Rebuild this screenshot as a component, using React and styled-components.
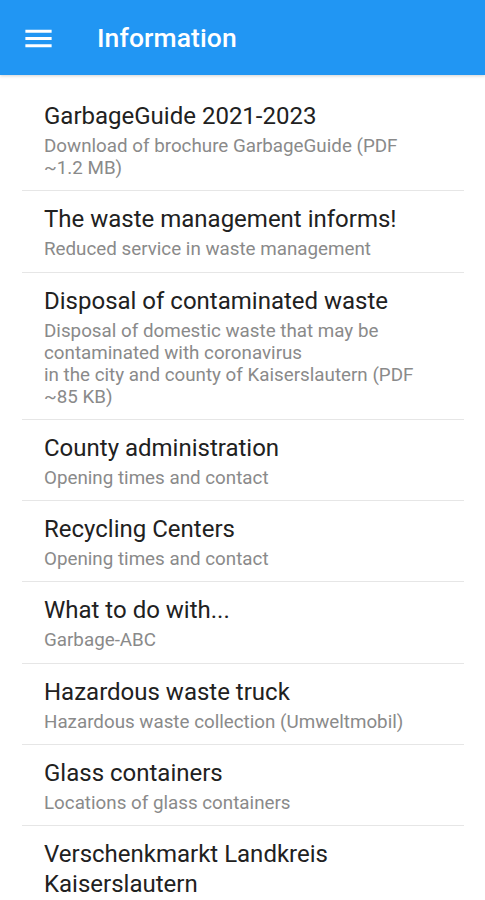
import React from "react";
import styled, { createGlobalStyle } from "styled-components";

const Global = createGlobalStyle`
  html, body { margin: 0; padding: 0; background: #ffffff; }
  body { font-family: Roboto, "Noto Sans", "Liberation Sans", sans-serif; }
`;

const Page = styled.div`
  width: 485px;
  height: 900px;
  overflow: hidden;
  background: #ffffff;
`;

const AppBar = styled.header`
  height: 75px;
  background: #2196f3;
  display: flex;
  align-items: center;
  padding-left: 21px;
  box-shadow: 0 1px 3px rgba(0, 0, 0, 0.18);
  position: relative;
`;

const MenuButton = styled.div`
  width: 35px;
  height: 35px;
  display: flex;
  margin-top: 1px;
`;

const Title = styled.h1`
  margin: 0 0 0 41px;
  color: #ffffff;
  font-size: 26.5px;
  font-weight: 500;
  letter-spacing: 0.1px;
`;

const List = styled.ul`
  list-style: none;
  margin: 0;
  padding: 13px 21px 0 22px;
`;

const Item = styled.li`
  padding: 13px 0 11.25px 22px;
  border-bottom: 1px solid #e6e6e6;
`;

const ItemTitle = styled.div`
  font-size: 24px;
  line-height: 30px;
  color: #212121;
  white-space: pre-line;
`;

const ItemSub = styled.div`
  margin-top: 4px;
  font-size: 18.8px;
  line-height: 22px;
  color: #8a8a8a;
  white-space: pre-line;
`;

const items = [
  ["GarbageGuide 2021-2023", "Download of brochure GarbageGuide (PDF\n~1.2 MB)"],
  ["The waste management informs!", "Reduced service in waste management"],
  [
    "Disposal of contaminated waste",
    "Disposal of domestic waste that may be\ncontaminated with coronavirus\nin the city and county of Kaiserslautern (PDF\n~85 KB)",
  ],
  ["County administration", "Opening times and contact"],
  ["Recycling Centers", "Opening times and contact"],
  ["What to do with...", "Garbage-ABC"],
  ["Hazardous waste truck", "Hazardous waste collection (Umweltmobil)"],
  ["Glass containers", "Locations of glass containers"],
  ["Verschenkmarkt Landkreis\nKaiserslautern", ""],
];

export default function App() {
  return (
    <Page>
      <Global />
      <AppBar>
        <MenuButton>
          <svg width="35" height="35" viewBox="0 0 24 24" fill="#ffffff">
            <path d="M3 18h18v-2H3v2zm0-5h18v-2H3v2zm0-7v2h18V6H3z" />
          </svg>
        </MenuButton>
        <Title>Information</Title>
      </AppBar>
      <List>
        {items.map(([t, s]) => (
          <Item key={t}>
            <ItemTitle>{t}</ItemTitle>
            {s && <ItemSub>{s}</ItemSub>}
          </Item>
        ))}
      </List>
    </Page>
  );
}
